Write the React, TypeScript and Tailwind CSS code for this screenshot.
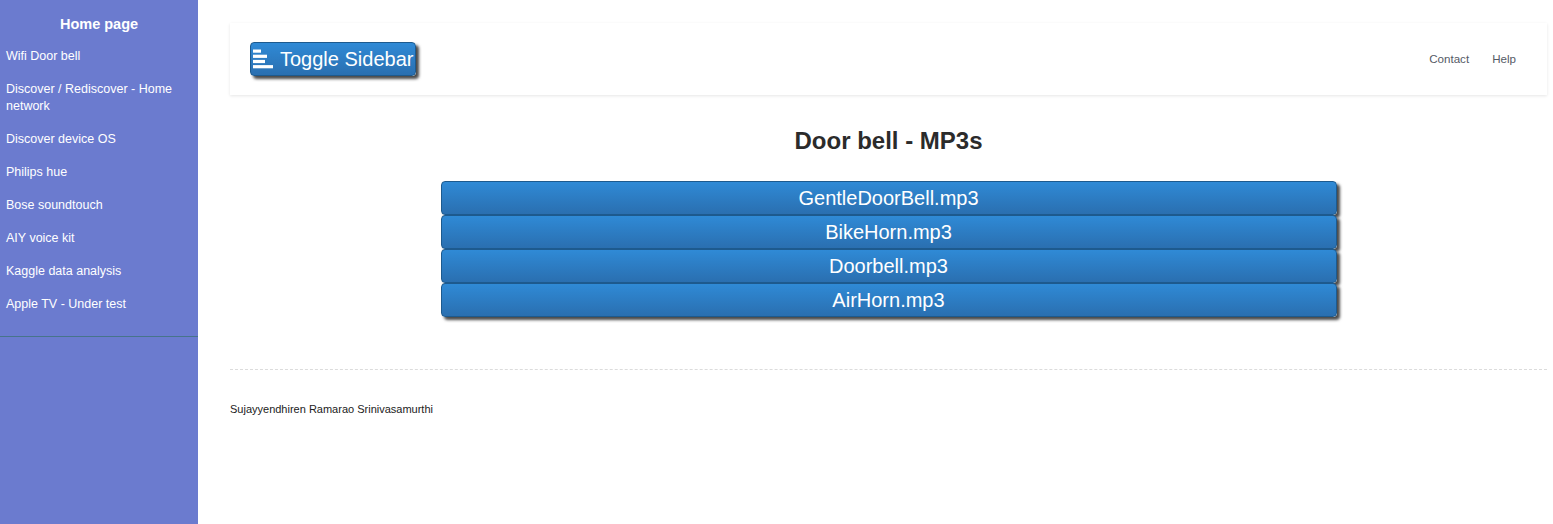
import React from "react";

const items: string[][] = [
  ["Wifi Door bell"],
  ["Discover / Rediscover - Home", "network"],
  ["Discover device OS"],
  ["Philips hue"],
  ["Bose soundtouch"],
  ["AIY voice kit"],
  ["Kaggle data analysis"],
  ["Apple TV - Under test"],
];

const mp3s = ["GentleDoorBell.mp3", "BikeHorn.mp3", "Doorbell.mp3", "AirHorn.mp3"];

export default function App() {
  return (
    <div className="flex min-h-screen w-full bg-white" style={{ fontFamily: '"Liberation Sans", Arial, sans-serif' }}>
      <aside className="w-[198px] shrink-0 bg-[#6b7bcf] text-white">
        <div className="pt-[14px] text-center text-[14.5px] font-bold leading-[20px]">Home page</div>
        <ul className="border-b border-[#47748b] pt-[6px] pb-[15px]">
          {items.map((it, i) => (
            <li key={i} className="px-[6px] py-[8px] text-[12.5px] leading-[17px]">
              {it.map((l, j) => (
                <div key={j}>{l}</div>
              ))}
            </li>
          ))}
        </ul>
      </aside>
      <main className="flex-1 pl-8 pr-[6px] pt-[23px]">
        <nav className="flex h-[72px] items-center justify-between bg-white px-5 shadow-[0_1px_3px_rgba(0,0,0,0.1)]">
          <button className="flex h-[34px] items-center gap-[6px] rounded-[4px] border border-[#1d5a8e] bg-gradient-to-b from-[#2f8ad6] to-[#2a6fb0] px-[2px] text-[20px] leading-none text-white shadow-[3px_3px_3px_#4a4a4a]">
            <svg width="21" height="20" viewBox="0 0 21 20">
              <rect x="0" y="0.5" width="8" height="3.2" fill="white" />
              <rect x="0" y="5.7" width="14" height="3.2" fill="white" />
              <rect x="0" y="10.9" width="12" height="3.2" fill="white" />
              <rect x="0" y="16.1" width="20" height="3.2" fill="white" />
            </svg>
            <span>Toggle Sidebar</span>
          </button>
          <div className="flex gap-[23px] pr-[11px] text-[11.6px] text-[#555a66]">
            <span>Contact</span>
            <span>Help</span>
          </div>
        </nav>
        <h2 className="mt-[31px] text-center text-[24px] font-bold leading-[30px] text-[#2b2b2b]">Door bell - MP3s</h2>
        <div className="mx-auto mt-[25px] flex w-[896px] flex-col">
          {mp3s.map((m) => (
            <button
              key={m}
              className="h-[34px] w-full rounded-[4px] border border-[#1d5a8e] bg-gradient-to-b from-[#2f8ad6] to-[#2a6fb0] text-[20px] leading-none text-white shadow-[3px_3px_3px_#4a4a4a]"
            >
              {m}
            </button>
          ))}
        </div>
        <div className="mt-[52px] border-t border-dashed border-[#dcdcdc]" />
        <div className="mt-[31px] text-[11px] text-[#222]">Sujayyendhiren Ramarao Srinivasamurthi</div>
      </main>
    </div>
  );
}
